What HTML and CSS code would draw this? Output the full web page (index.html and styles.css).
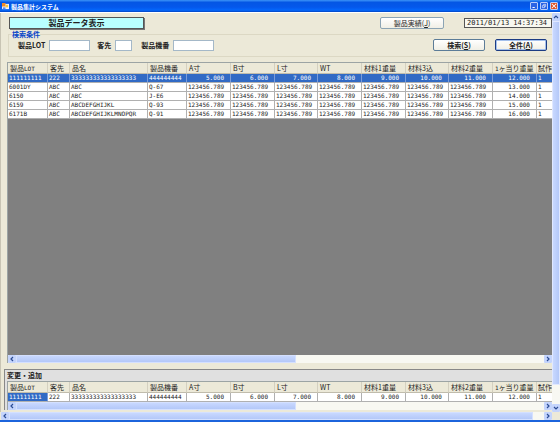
FILE: index.html
```html
<!DOCTYPE html>
<html lang="ja">
<head>
    <meta charset="UTF-8">
    <title>製品集計システム</title>
    <link rel="stylesheet" href="styles.css">
</head>
<body>

<div class="window">
    <header class="title-bar">
        <svg class="app-icon" viewBox="0 0 8 8" aria-hidden="true">
            <rect x="0" y="1" width="8" height="6" fill="#f4f4ff"/>
            <rect x="0" y="0" width="4" height="4" fill="#f08a28"/>
            <rect x="4" y="2" width="3" height="3" fill="#f6c83c"/>
            <rect x="1" y="5" width="3" height="2" fill="#5a8ae8"/>
        </svg>
        <span class="title-text">製品集計システム</span>
        <button type="button" class="win-button" aria-label="最小化">
            <svg viewBox="0 0 8 8"><path d="M2 6H5" stroke="#fff" stroke-width="1.3"/></svg>
        </button>
        <button type="button" class="win-button" aria-label="元に戻す">
            <svg viewBox="0 0 8 8"><path d="M3.5 3V1.8H6.2V4.5H5M1.8 3.5H4.8V6.2H1.8Z" fill="none" stroke="#fff" stroke-width=".8"/></svg>
        </button>
        <button type="button" class="win-button close" aria-label="閉じる">
            <svg viewBox="0 0 8 8"><path d="M1 1L7 7M7 1L1 7" stroke="#fff" stroke-width="1.4"/></svg>
        </button>
    </header>

    <div class="client">
        <main class="content">
            <div class="top-row">
                <h1 class="page-title">製品データ表示</h1>
                <button type="button" class="button results">製品実績(<u>J</u>)</button>
                <time class="clock">2011/01/13 14:37:34</time>
            </div>

            <form>
                <fieldset class="search">
                    <legend>検索条件</legend>
                    <label for="lot">製品LOT</label>
                    <input type="text" id="lot" class="lot">
                    <label for="customer">客先</label>
                    <input type="text" id="customer" class="customer">
                    <label for="machine">製品機番</label>
                    <input type="text" id="machine" class="machine">
                    <button type="button" class="button search-button">検索(<u>S</u>)</button>
                    <button type="button" class="button all-button">全件(<u>A</u>)</button>
                </fieldset>
            </form>

            <section class="grid main-grid">
                <div class="grid-view">
                    <table>
                        <colgroup>
                            <col class="c-lot"><col class="c-customer"><col class="c-name"><col class="c-machine">
                            <col class="c-num"><col class="c-num"><col class="c-num-s"><col class="c-num">
                            <col class="c-num"><col class="c-num-s"><col class="c-num"><col class="c-num"><col class="c-trial">
                        </colgroup>
                        <thead>
                            <tr><th>製品<span class="half">LOT</span></th><th>客先</th><th>品名</th><th>製品機番</th><th>A寸</th><th>B寸</th><th>L寸</th><th>WT</th><th>材料1重量</th><th>材料3込</th><th>材料2重量</th><th><span class="half">1</span>ヶ当り重量</th><th>試作</th></tr>
                        </thead>
                        <tbody>
                            <tr class="selected"><td>111111111</td><td>222</td><td>333333333333333333</td><td>444444444</td><td>5.000</td><td>6.000</td><td>7.000</td><td>8.000</td><td>9.000</td><td>10.000</td><td>11.000</td><td>12.000</td><td>1</td></tr>
                            <tr><td>6001DY</td><td>ABC</td><td>ABC</td><td>Q-67</td><td>123456.789</td><td>123456.789</td><td>123456.789</td><td>123456.789</td><td>123456.789</td><td>123456.789</td><td>123456.789</td><td>13.000</td><td>1</td></tr>
                            <tr><td>6150</td><td>ABC</td><td>ABC</td><td>J-E6</td><td>123456.789</td><td>123456.789</td><td>123456.789</td><td>123456.789</td><td>123456.789</td><td>123456.789</td><td>123456.789</td><td>14.000</td><td>1</td></tr>
                            <tr><td>6159</td><td>ABC</td><td>ABCDEFGHIJKL</td><td>Q-93</td><td>123456.789</td><td>123456.789</td><td>123456.789</td><td>123456.789</td><td>123456.789</td><td>123456.789</td><td>123456.789</td><td>15.000</td><td>1</td></tr>
                            <tr><td>6171B</td><td>ABC</td><td>ABCDEFGHIJKLMNOPQR</td><td>Q-91</td><td>123456.789</td><td>123456.789</td><td>123456.789</td><td>123456.789</td><td>123456.789</td><td>123456.789</td><td>123456.789</td><td>16.000</td><td>1</td></tr>
                        </tbody>
                    </table>
                </div>
                <div class="h-scroll">
                    <button type="button" class="arrow" aria-label="左へ"><svg viewBox="0 0 8 8"><path d="M5 2L3 4L5 6" class="arrow-line"/></svg></button>
                    <div class="track"><div class="thumb half-thumb"></div></div>
                    <button type="button" class="arrow" aria-label="右へ"><svg viewBox="0 0 8 8"><path d="M3 2L5 4L3 6" class="arrow-line"/></svg></button>
                </div>
            </section>

            <section class="edit">
                <h2>変更・追加</h2>
                <div class="grid edit-grid">
                    <div class="grid-view">
                        <table>
                            <colgroup>
                                <col class="c-lot"><col class="c-customer"><col class="c-name"><col class="c-machine">
                                <col class="c-num"><col class="c-num"><col class="c-num-s"><col class="c-num">
                                <col class="c-num"><col class="c-num-s"><col class="c-num"><col class="c-num"><col class="c-trial">
                            </colgroup>
                            <thead>
                                <tr><th>製品<span class="half">LOT</span></th><th>客先</th><th>品名</th><th>製品機番</th><th>A寸</th><th>B寸</th><th>L寸</th><th>WT</th><th>材料1重量</th><th>材料3込</th><th>材料2重量</th><th><span class="half">1</span>ヶ当り重量</th><th>試作</th></tr>
                            </thead>
                            <tbody>
                                <tr><td class="active">111111111</td><td>222</td><td>333333333333333333</td><td>444444444</td><td>5.000</td><td>6.000</td><td>7.000</td><td>8.000</td><td>9.000</td><td>10.000</td><td>11.000</td><td>12.000</td><td>1</td></tr>
                            </tbody>
                        </table>
                    </div>
                    <div class="h-scroll">
                        <button type="button" class="arrow" aria-label="左へ"><svg viewBox="0 0 8 8"><path d="M5 2L3 4L5 6" class="arrow-line"/></svg></button>
                        <div class="track"><div class="thumb half-thumb"></div></div>
                        <button type="button" class="arrow" aria-label="右へ"><svg viewBox="0 0 8 8"><path d="M3 2L5 4L3 6" class="arrow-line"/></svg></button>
                    </div>
                </div>
            </section>
        </main>

        <div class="v-scroll">
            <button type="button" class="arrow" aria-label="上へ"><svg viewBox="0 0 8 8"><path d="M2 5L4 3L6 5" class="arrow-line"/></svg></button>
            <div class="v-track"><div class="v-thumb"></div></div>
            <button type="button" class="arrow" aria-label="下へ"><svg viewBox="0 0 8 8"><path d="M2 3L4 5L6 3" class="arrow-line"/></svg></button>
        </div>
    </div>

    <div class="h-scroll window-scroll">
        <button type="button" class="arrow" aria-label="左へ"><svg viewBox="0 0 8 8"><path d="M5 2L3 4L5 6" class="arrow-line"/></svg></button>
        <div class="track"><div class="thumb wide-thumb"></div></div>
        <button type="button" class="arrow" aria-label="右へ"><svg viewBox="0 0 8 8"><path d="M3 2L5 4L3 6" class="arrow-line"/></svg></button>
    </div>
</div>

</body>
</html>
```

FILE: styles.css
```css
* {
    box-sizing: border-box;
}
body {
    margin: 0;
    font-family: "Noto Sans CJK JP", sans-serif;
    font-size: 7px;
    line-height: 9px;
    color: #222;
    background-color: #ece9d8;
}
button, input {
    font-family: inherit;
    font-size: inherit;
    line-height: inherit;
    padding: 0;
    margin: 0;
}
svg {
    display: block;
    width: 100%;
    height: 100%;
}
h1, h2 {
    margin: 0;
    font-size: 7px;
}
.window {
    display: flex;
    flex-direction: column;
    height: 100vh;
    overflow: hidden;
    border-bottom: 2px solid #1c64dc;
}

/* title bar */
.title-bar {
    display: flex;
    align-items: center;
    gap: 2px;
    height: 12px;
    padding: 0 2px;
    background: linear-gradient(#3c94f8, #0456e4 20%, #0458ec 60%, #0468fc 85%, #0444c0);
    color: #fff;
}
.app-icon {
    width: 7px;
    height: 7px;
}
.title-text {
    flex: 1;
    font-size: 6px;
    font-weight: bold;
}
.win-button {
    width: 8px;
    height: 8px;
    border: 1px solid #b8ccf8;
    border-radius: 1px;
    background-color: #2c64e4;
}
.win-button.close {
    background-color: #dc4c20;
}

.client {
    flex: 1;
    display: flex;
    min-height: 0;
    border-top: 1px solid #fff;
}
.content {
    flex: 1;
    display: flex;
    flex-direction: column;
    min-width: 0;
    padding: 3px 0 0 4px;
    border-left: 1px solid #c8c4b4;
}

/* heading and clock */
.top-row {
    display: flex;
    align-items: center;
    padding-left: 4px;
    height: 14px;
}
.page-title {
    width: 135px;
    height: 12px;
    line-height: 10px;
    text-align: center;
    font-size: 8px;
    background-color: #b8ffff;
    border: 1px solid #555;
    box-shadow: 1px 1px 0 #777;
}
.button {
    height: 12px;
    line-height: 10px;
    border: 1px solid #5c7c98;
    border-radius: 2px;
    background: linear-gradient(#fff, #f0efe6);
    color: #222;
}
.results {
    width: 64px;
    margin-left: auto;
    border-color: #8ca4b4;
}
.clock {
    width: 88px;
    height: 10px;
    margin-left: 20px;
    padding-left: 2px;
    line-height: 8px;
    border: 1px solid #555;
    background-color: #f8f8f0;
    font-family: "DejaVu Sans Mono", monospace;
    white-space: nowrap;
}

/* search */
.search {
    display: flex;
    align-items: center;
    margin: 0 0 0 3px;
    padding: 0 5px 5px 9px;
    border: 1px solid #dcd8c4;
    border-right: 0;
    font-weight: bold;
    min-width: 0;
}
.search legend {
    margin-left: -6px;
    padding: 0;
    color: #0846c8;
}
.search input {
    height: 11px;
    border: 1px solid #a4b8c8;
    background-color: #fff;
    margin-left: 4px;
}
.search input + label {
    margin-left: 7px;
}
.search .customer + label {
    margin-left: 9px;
}
.lot {
    width: 41px;
}
.customer {
    width: 17px;
}
.machine {
    width: 41px;
}
.search .button {
    width: 52px;
    font-weight: bold;
}
.search .search-button {
    margin-left: auto;
}
.search .all-button {
    margin-left: 10px;
    border-color: #1c3c84;
    box-shadow: inset 0 0 0 1px #a4c0ec;
}
.half {
    font-family: "DejaVu Sans Mono", monospace;
    font-size: 6px;
}

/* data grids */
.grid {
    margin-left: 2px;
    border-top: 1px solid #9ca4a4;
    border-left: 1px solid #9ca4a4;
}
.main-grid {
    flex: 1;
    display: flex;
    flex-direction: column;
    min-height: 0;
    margin-top: 5px;
}
.main-grid .grid-view {
    flex: 1;
}
.edit-grid {
    margin-left: 1px;
}
.grid-view {
    overflow: hidden;
    background-color: #808080;
}
table {
    width: 100%;
    table-layout: fixed;
    border-collapse: separate;
    border-spacing: 0;
}
.c-lot {
    width: 40px;
}
.c-customer {
    width: 22px;
}
.c-name {
    width: 78px;
}
.c-machine {
    width: 39px;
}
.c-num {
    width: 44px;
}
.c-num-s {
    width: 43px;
}
th, td {
    padding: 0 0 0 1px;
    white-space: nowrap;
    text-align: left;
}
th {
    height: 11px;
    padding-left: 2px;
    line-height: 10px;
    font-weight: normal;
    vertical-align: top;
    background-color: #ece9d8;
    border-right: 1px solid #d4d0c0;
    border-bottom: 1px solid #c0bcac;
}
th .half {
    line-height: 1px;
}
td {
    height: 9px;
    line-height: 8px;
    font-family: "DejaVu Sans Mono", monospace;
    font-size: 6px;
    background-color: #fff;
    border-right: 1px solid #b0b0b0;
    border-bottom: 1px solid #b0b0b0;
}
th:last-child, td:last-child {
    padding-left: 1px;
    border-right: 0;
}
td:nth-child(n+5):nth-child(-n+12) {
    text-align: right;
    padding-right: 6px;
}
.selected td, td.active {
    color: #fff;
    background-color: #316ac5;
    border-right-color: #7c9cd8;
}

/* scroll bars */
.h-scroll {
    display: flex;
    height: 8px;
    background-color: #f8f8f2;
}
.arrow {
    flex: none;
    width: 8px;
    height: 8px;
    border: 0;
    border-radius: 1px;
    background-color: #c4d4fc;
}
.arrow-line {
    fill: none;
    stroke: #2c4c94;
    stroke-width: 1.2;
}
.track {
    flex: 1;
}
.thumb {
    height: 8px;
    border: 1px solid #d4e0ff;
    background: linear-gradient(#c8d8ff, #b4c8f8);
}
.half-thumb {
    width: 53%;
}
.wide-thumb {
    width: 98%;
}
.v-scroll {
    display: flex;
    flex-direction: column;
    width: 8px;
    background-color: #f8f8f2;
}
.v-track {
    flex: 1;
}
.v-thumb {
    height: 95%;
    border: 1px solid #e0e8ff;
    background: linear-gradient(90deg, #c8d8ff, #b4c8f8);
}
.window-scroll {
    margin: 0 8px 0 1px;
}

/* edit area */
.edit {
    margin: 6px 0 2px -1px;
    padding-left: 1px;
    border-top: 1px solid #888;
    border-left: 1px solid #888;
    background-color: #e0e0e0;
}
.edit h2 {
    height: 11px;
    padding-left: 1px;
    line-height: 11px;
}
```
